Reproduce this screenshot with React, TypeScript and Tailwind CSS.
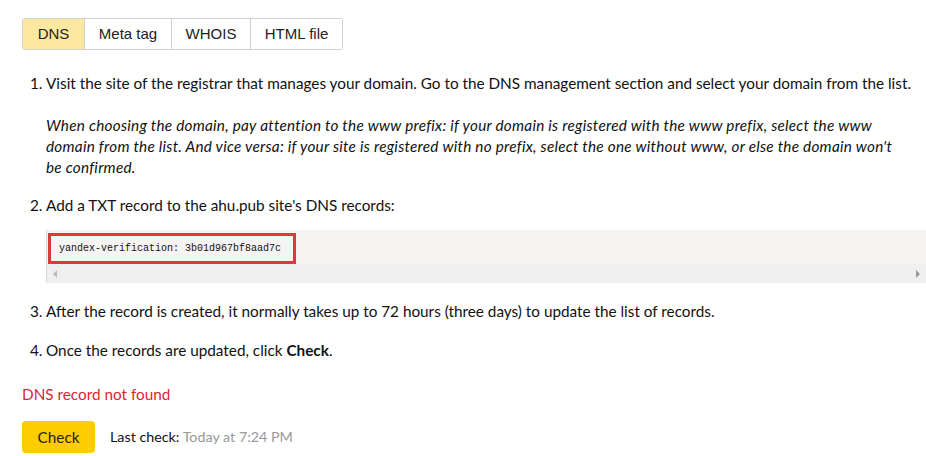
import React from "react";

const tabs = ["DNS", "Meta tag", "WHOIS", "HTML file"];
const tabW = ["w-[61px]", "w-[87px]", "w-[79px]", "w-[92px]"];

export default function App() {
  return (
    <div className="w-[926px] h-[456px] bg-white overflow-hidden text-[#111]" style={{ fontFamily: "Lato, sans-serif" }}>
      <div className="pl-[22px] pt-[18px]">
        <div className="flex h-[32px] w-fit border border-[#d0d0d0] rounded-[3px] overflow-hidden" style={{ fontFamily: "'Liberation Sans', Arial, sans-serif" }}>
          {tabs.map((t, i) => (
            <div
              key={t}
              className={`${tabW[i]} flex items-center justify-center text-[15px] text-[#222] ${i > 0 ? "border-l border-[#d0d0d0]" : ""} ${i === 0 ? "bg-[#fde8a0]" : "bg-white"}`}
            >
              {t}
            </div>
          ))}
        </div>
      </div>

      <div className="pl-[30px] pt-[23px] text-[15.3px] leading-[21px]">
        <div className="flex">
          <span className="w-[16px] shrink-0">1.</span>
          <span className="whitespace-nowrap">Visit the site of the registrar that manages your domain. Go to the DNS management section and select your domain from the list.</span>
        </div>
        <p className="pl-[16px] pt-[21px] italic tracking-[0.25px] whitespace-nowrap">
          When choosing the domain, pay attention to the www prefix: if your domain is registered with the www prefix, select the www
          <br />
          domain from the list. And vice versa: if your site is registered with no prefix, select the one without www, or else the domain won't
          <br />
          be confirmed.
        </p>
        <div className="flex pt-[17px]">
          <span className="w-[16px] shrink-0">2.</span>
          <span>Add a TXT record to the ahu.pub site's DNS records:</span>
        </div>
      </div>

      <div className="ml-[46px] mt-[14px] h-[53px] bg-[#f5f4f2] border-l border-[#d8d8d8] flex flex-col">
        <div className="h-[34px] flex items-end">
          <div className="ml-[1px] h-[31px] w-[248px] border-[3px] border-[#d8393a] flex items-center pl-[8px]">
            <span className="text-[10px] text-[#111]" style={{ fontFamily: "'Liberation Mono', monospace" }}>
              yandex-verification: 3b01d967bf8aad7c
            </span>
          </div>
        </div>
        <div className="flex-1 bg-[#efefef] flex items-center justify-between px-[6px]">
          <svg width="5" height="8" viewBox="0 0 5 8"><path d="M4 0 L0 4 L4 8 Z" fill="#bbb" /></svg>
          <svg width="5" height="8" viewBox="0 0 5 8"><path d="M1 0 L5 4 L1 8 Z" fill="#999" /></svg>
        </div>
      </div>

      <div className="pl-[30px] pt-[18px] text-[15.3px] leading-[21px]">
        <div className="flex">
          <span className="w-[16px] shrink-0">3.</span>
          <span>After the record is created, it normally takes up to 72 hours (three days) to update the list of records.</span>
        </div>
        <div className="flex pt-[18px]">
          <span className="w-[16px] shrink-0">4.</span>
          <span>Once the records are updated, click <b>Check</b>.</span>
        </div>
      </div>

      <div className="pl-[22px] pt-[23px] text-[15.3px] leading-[21px] text-[#dd2530]">DNS record not found</div>

      <div className="pl-[22px] pt-[16px] flex items-center">
        <div className="w-[73px] h-[32px] bg-[#ffcc00] rounded-[4px] flex items-center justify-center text-[15.3px] text-[#222]">Check</div>
        <div className="ml-[15px] text-[14.3px]">
          <span className="text-[#111]">Last check: </span>
          <span className="text-[#999]">Today at 7:24 PM</span>
        </div>
      </div>
    </div>
  );
}
